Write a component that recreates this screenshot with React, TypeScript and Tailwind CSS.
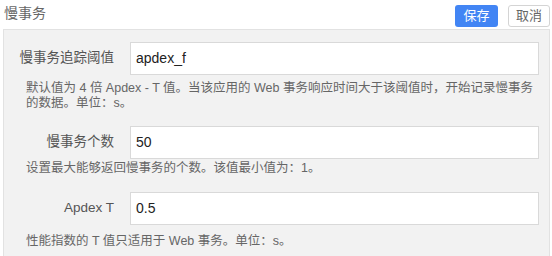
import React from "react";

const font = { fontFamily: '"Liberation Sans", "Noto Sans CJK SC", sans-serif' };

function Row({
  label,
  value,
  help,
  inputMt,
  helpMt,
}: {
  label: string;
  value: string;
  help: React.ReactNode;
  inputMt: string;
  helpMt: string;
}) {
  return (
    <div className={inputMt}>
      <div className="flex items-center">
        <div className="flex w-[104px] shrink-0 justify-end pr-[16px]">
          <span className="whitespace-nowrap text-[13.5px] text-[#555]">{label}</span>
        </div>
        <div className="flex h-[33px] flex-1 items-center border border-[#d9d9d9] bg-white pl-[5px] text-[14px] text-[#222]">
          {value}
        </div>
      </div>
      <div className={`${helpMt} whitespace-nowrap text-[12.5px] leading-[15px] text-[#666]`}>{help}</div>
    </div>
  );
}

export default function App() {
  return (
    <div className="h-[256px] w-[552px] overflow-hidden bg-white" style={font}>
      <div className="flex h-[29px] items-start justify-between pl-[4px] pr-[2px]">
        <div className="mt-[5px] text-[14px] leading-[16px] text-[#666]">慢事务</div>
        <div className="mt-[5px] flex gap-[10px]">
          <button className="flex h-[22px] w-[43px] items-center justify-center rounded-[3px] bg-[#4285f4] text-[13px] text-white">
            保存
          </button>
          <button className="flex h-[22px] w-[42px] items-center justify-center rounded-[3px] border border-[#d4d4d4] bg-white text-[13px] text-[#666]">
            取消
          </button>
        </div>
      </div>
      <div className="ml-[3px] h-[240px] w-[547px] border border-[#e2e2e2] bg-[#f2f2f2] pl-[22px] pr-[10px] pt-[12px]">
        <Row
          label="慢事务追踪阈值"
          value="apdex_f"
          help={
            <>
              默认值为 4 倍 Apdex - T 值。当该应用的 Web 事务响应时间大于该阈值时，开始记录慢事务
              <br />
              的数据。单位：s。
            </>
          }
          inputMt="mt-0"
          helpMt="mt-[6px]"
        />
        <Row
          label="慢事务个数"
          value="50"
          help="设置最大能够返回慢事务的个数。该值最小值为：1。"
          inputMt="mt-[15px]"
          helpMt="mt-[2px]"
        />
        <Row
          label="Apdex T"
          value="0.5"
          help="性能指数的 T 值只适用于 Web 事务。单位：s。"
          inputMt="mt-[16px]"
          helpMt="mt-[9px]"
        />
      </div>
    </div>
  );
}
